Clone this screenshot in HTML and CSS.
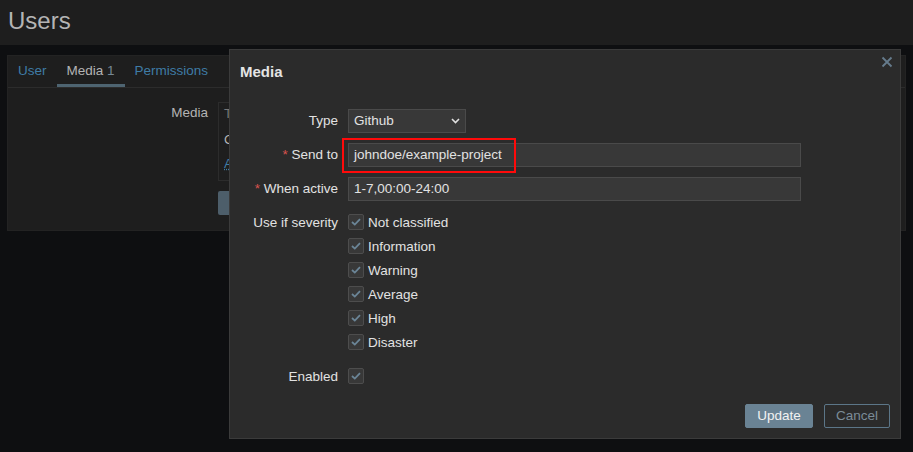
FILE: index.html
```html
<!DOCTYPE html>
<html lang="en">
<head>
<meta charset="utf-8">
<title>Users</title>
<link rel="stylesheet" href="styles.css">
</head>
<body>
<header class="page-header"><h1>Users</h1></header>
<main class="content">
  <section class="panel">
    <nav class="tabs">
      <a class="tab">User</a>
      <a class="tab active">Media <span class="count">1</span></a>
      <a class="tab">Permissions</a>
    </nav>
    <div class="panel-body">
      <div class="panel-label">Media</div>
      <div class="panel-field">
        <div class="media-box">
          <div class="mb-head">Type</div>
          <div class="mb-row">Github</div>
          <div class="mb-link">Add</div>
        </div>
        <button class="panel-btn">Update</button>
      </div>
    </div>
  </section>
</main>

<div class="dialog">
  <div class="dialog-head">
    <h2>Media</h2>
    <button class="close" aria-label="Close">
      <svg width="12" height="12" viewBox="0 0 12 12"><path d="M1.5 1.5L10.5 10.5M10.5 1.5L1.5 10.5" stroke="#657b8c" stroke-width="1.8" fill="none"/></svg>
    </button>
  </div>
  <form class="dialog-form">
    <div class="row">
      <label class="lbl">Type</label>
      <div class="field">
        <div class="select">Github
          <svg class="chev" width="9" height="6" viewBox="0 0 9 6"><path d="M1 1L4.5 4.5L8 1" stroke="#e0e0e0" stroke-width="1.6" fill="none"/></svg>
        </div>
      </div>
    </div>
    <div class="row">
      <label class="lbl"><span class="req">*</span> Send to</label>
      <div class="field highlight-wrap">
        <div class="input">johndoe/example-project</div>
        <div class="highlight"></div>
      </div>
    </div>
    <div class="row">
      <label class="lbl"><span class="req">*</span> When active</label>
      <div class="field"><div class="input">1-7,00:00-24:00</div></div>
    </div>
    <div class="row">
      <label class="lbl lbl-top">Use if severity</label>
      <div class="field checks">
        <div class="check"><span class="box"><svg width="10" height="8" viewBox="0 0 10 8"><path d="M1 4L3.8 6.6L9 1.2" stroke="#6b8597" stroke-width="1.8" fill="none"/></svg></span>Not classified</div>
        <div class="check"><span class="box"><svg width="10" height="8" viewBox="0 0 10 8"><path d="M1 4L3.8 6.6L9 1.2" stroke="#6b8597" stroke-width="1.8" fill="none"/></svg></span>Information</div>
        <div class="check"><span class="box"><svg width="10" height="8" viewBox="0 0 10 8"><path d="M1 4L3.8 6.6L9 1.2" stroke="#6b8597" stroke-width="1.8" fill="none"/></svg></span>Warning</div>
        <div class="check"><span class="box"><svg width="10" height="8" viewBox="0 0 10 8"><path d="M1 4L3.8 6.6L9 1.2" stroke="#6b8597" stroke-width="1.8" fill="none"/></svg></span>Average</div>
        <div class="check"><span class="box"><svg width="10" height="8" viewBox="0 0 10 8"><path d="M1 4L3.8 6.6L9 1.2" stroke="#6b8597" stroke-width="1.8" fill="none"/></svg></span>High</div>
        <div class="check"><span class="box"><svg width="10" height="8" viewBox="0 0 10 8"><path d="M1 4L3.8 6.6L9 1.2" stroke="#6b8597" stroke-width="1.8" fill="none"/></svg></span>Disaster</div>
      </div>
    </div>
    <div class="row">
      <label class="lbl">Enabled</label>
      <div class="field checks">
        <div class="check"><span class="box"><svg width="10" height="8" viewBox="0 0 10 8"><path d="M1 4L3.8 6.6L9 1.2" stroke="#6b8597" stroke-width="1.8" fill="none"/></svg></span></div>
      </div>
    </div>
  </form>
  <div class="dialog-foot">
    <button class="btn btn-primary">Update</button>
    <button class="btn btn-alt">Cancel</button>
  </div>
</div>
</body>
</html>
```

FILE: styles.css
```css
* { box-sizing: border-box; }
html, body { margin: 0; padding: 0; }
body {
  background: #0e0f11;
  font-family: "Liberation Sans", Arial, sans-serif;
  font-size: 13.5px;
  color: #e2e2e2;
  width: 913px;
  height: 452px;
  overflow: hidden;
  position: relative;
}
.page-header {
  height: 45px;
  background: #1e1e1e;
  padding: 6px 0 0 8px;
}
.page-header h1 {
  margin: 0;
  font-size: 24px;
  font-weight: normal;
  line-height: 30px;
  color: #b4b4b4;
}
.content { padding: 10px 7px 0 7px; }
.panel {
  background: #1e1e1e;
  border: 1px solid #232323;
  height: 176px;
}
.tabs {
  display: flex;
  height: 32px;
  border-bottom: 1px solid #2c2c2c;
}
.tab {
  padding: 0 10px;
  line-height: 29px;
  color: #3f7ca6;
  border-bottom: 3px solid transparent;
}
.tab.active {
  color: #b4b4b4;
  border-bottom-color: #4e6471;
}
.tab .count { color: #768895; }
.panel-body {
  display: grid;
  grid-template-columns: 200px 1fr;
  column-gap: 10px;
  padding-top: 14px;
}
.panel-label {
  text-align: right;
  color: #b4b4b4;
  line-height: 22px;
}
.media-box {
  border: 1px solid #2c2c2c;
  height: 79px;
  width: 500px;
  padding: 3px 5px;
}
.mb-head { color: #777; line-height: 16px; margin-bottom: 10px; }
.mb-row { color: #b4b4b4; line-height: 16px; margin-bottom: 8px; }
.mb-link { color: #3f7ca6; text-decoration: underline dotted; line-height: 16px; }
.panel-btn {
  margin-top: 10px;
  height: 24px;
  width: 70px;
  border: none;
  border-radius: 2px;
  background: #4d5e6a;
  color: #e6e6e6;
  font: inherit;
}

.dialog {
  position: absolute;
  left: 229px;
  top: 49px;
  width: 672px;
  height: 390px;
  background: #2b2b2b;
  border: 1px solid #3b3b3b;
  display: flex;
  flex-direction: column;
}
.dialog-head {
  position: relative;
  padding: 12px 10px 0 10px;
  height: 59px;
}
.dialog-head h2 {
  margin: 0;
  font-size: 15px;
  font-weight: bold;
  line-height: 20px;
  color: #e4e4e4;
}
.close {
  position: absolute;
  right: 7px;
  top: 6px;
  padding: 0;
  border: none;
  background: none;
  width: 12px;
  height: 12px;
  display: block;
}
.close svg { display: block; }
.dialog-form {
  display: flex;
  flex-direction: column;
  gap: 10px;
  padding: 0 10px;
}
.row {
  display: grid;
  grid-template-columns: 98px 1fr;
  column-gap: 10px;
}
.lbl {
  text-align: right;
  line-height: 24px;
  color: #e2e2e2;
  white-space: nowrap;
}
.req { color: #d9534f; }
.field { position: relative; }
.select {
  position: relative;
  width: 118px;
  height: 24px;
  background: #383838;
  border: 1px solid #4a4a4a;
  padding: 0 5px;
  line-height: 22px;
  color: #e2e2e2;
}
.chev {
  position: absolute;
  right: 5px;
  top: 8px;
}
.input {
  width: 453px;
  height: 24px;
  background: #383838;
  border: 1px solid #4a4a4a;
  padding: 0 5px;
  line-height: 22px;
  color: #e2e2e2;
}
.highlight {
  position: absolute;
  left: -6px;
  top: -5px;
  width: 174px;
  height: 35px;
  border: 2px solid #ff0a0a;
}
.checks { display: flex; flex-direction: column; }
.check {
  display: flex;
  align-items: flex-start;
  height: 24px;
  line-height: 23px;
}
.box {
  width: 16px;
  height: 16px;
  margin-top: 3px;
  margin-right: 4px;
  background: #383838;
  border: 1px solid #4d4d4d;
  border-radius: 2px;
  display: flex;
  align-items: center;
  justify-content: center;
  flex: none;
}
.box svg { display: block; }
.dialog-foot {
  margin-top: auto;
  display: flex;
  justify-content: flex-end;
  gap: 11px;
  padding: 0 10px 10px 0;
}
.btn {
  height: 24px;
  font: inherit;
  border-radius: 2px;
  padding: 0;
  line-height: 20px;
}
.btn-primary {
  width: 68px;
  background: #6a8394;
  border: 1px solid #6a8394;
  color: #f2f2f2;
}
.btn-alt {
  width: 66px;
  background: transparent;
  border: 1px solid #5c7688;
  color: #7b8c98;
}
```
